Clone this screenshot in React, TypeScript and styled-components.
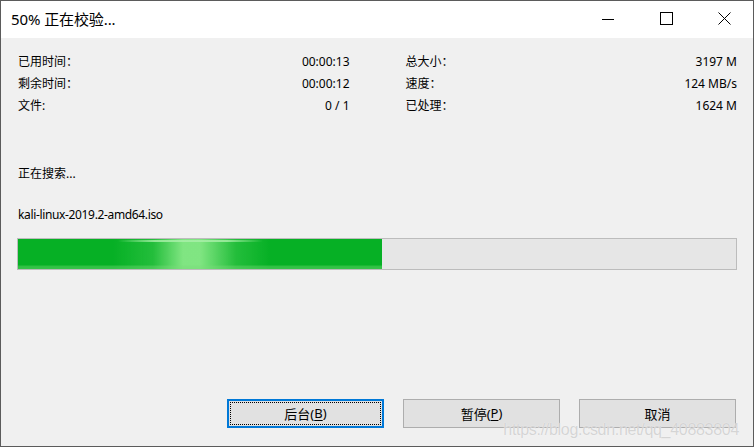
import React from "react";
import styled, { createGlobalStyle } from "styled-components";

const Global = createGlobalStyle`
  html, body { margin: 0; padding: 0; background: #f0f0f0; }
  body { font-family: "Noto Sans", "Noto Sans CJK SC", sans-serif; }
`;

const Window = styled.div`
  position: relative;
  box-sizing: border-box;
  width: 754px;
  height: 447px;
  border: 1px solid #5b5b5b;
  background: #f0f0f0;
  display: flex;
  flex-direction: column;
  color: #000;
  font-family: "Noto Sans", "Noto Sans CJK SC", sans-serif;
  font-size: 12px;
  overflow: hidden;
`;

const TitleBar = styled.div`
  height: 37px;
  background: #fff;
  display: flex;
  align-items: center;
  flex-shrink: 0;
`;

const Title = styled.div`
  flex: 1;
  padding-left: 10px;
  font-size: 15px;
  letter-spacing: -0.1px;
  padding-bottom: 2px;
`;

const CtrlButton = styled.div`
  width: 58px;
  height: 37px;
  display: flex;
  align-items: center;
  justify-content: center;
  padding-bottom: 2px;
  box-sizing: border-box;
`;

const Content = styled.div`
  flex: 1;
  display: flex;
  flex-direction: column;
  padding: 12px 16px 18px 16px;
`;

const InfoGrid = styled.div`
  display: grid;
  grid-template-columns: 1fr 1fr;
  column-gap: 56px;
  padding-left: 1px;
`;

const InfoRow = styled.div`
  height: 22px;
  display: flex;
  align-items: center;
  justify-content: space-between;
`;

const Value = styled.span`
  white-space: pre;
`;

const Status = styled.div`
  margin-top: 46px;
  height: 22px;
  display: flex;
  align-items: center;
  padding-left: 1px;
`;

const FileName = styled.div`
  margin-top: 19px;
  height: 22px;
  display: flex;
  align-items: center;
  letter-spacing: -0.35px;
  padding-left: 1px;
`;

const Bar = styled.div`
  margin-top: 13px;
  height: 32px;
  box-sizing: border-box;
  border: 1px solid #bcbcbc;
  background: #e6e6e6;
  display: flex;
`;

const Fill = styled.div`
  position: relative;
  height: 100%;
  background:
    linear-gradient(180deg,
      transparent 0, transparent 26px,
      rgba(120, 220, 120, 0.35) 27px, rgba(120, 220, 120, 0.45) 30px),
    linear-gradient(90deg,
      rgba(130, 230, 130, 0) 95px,
      rgba(90, 215, 100, 0.35) 135px,
      rgba(135, 232, 135, 0.95) 165px,
      rgba(135, 232, 135, 0.95) 182px,
      rgba(90, 215, 100, 0.35) 218px,
      rgba(130, 230, 130, 0) 252px),
    #06b025;
`;

const TopGlint = styled.div`
  position: absolute;
  top: 1px;
  left: 100px;
  width: 145px;
  height: 2px;
  background: linear-gradient(90deg,
    rgba(170, 240, 170, 0),
    rgba(170, 240, 170, 0.8) 25%,
    rgba(170, 240, 170, 0.8) 75%,
    rgba(170, 240, 170, 0));
`;

const ButtonRow = styled.div`
  margin-top: auto;
  display: flex;
  justify-content: flex-end;
  gap: 19px;
  padding-right: 1px;
`;

const Button = styled.div<{ $focused?: boolean }>`
  position: relative;
  width: 157px;
  height: 29px;
  box-sizing: border-box;
  display: flex;
  align-items: center;
  justify-content: center;
  background: #e1e1e1;
  border: ${(p) => (p.$focused ? "2px solid #0078d7" : "1px solid #adadad")};
  font-size: 13px;
  padding-bottom: 1px;
`;

const FocusRing = styled.div`
  position: absolute;
  inset: 1px;
  border: 1px dotted #000;
  pointer-events: none;
`;

const Mnemonic = styled.span`
  text-decoration: underline;
  text-underline-offset: 2px;
`;

const Watermark = styled.div`
  position: absolute;
  right: 14px;
  bottom: 7px;
  font-family: "Liberation Sans", Arial, sans-serif;
  font-size: 16px;
  color: rgba(200, 200, 200, 0.75);
  text-shadow: 0 0 1px rgba(255, 255, 255, 0.9);
  letter-spacing: -0.3px;
  pointer-events: none;
`;

const MinIcon = () => (
  <svg width="12" height="12" viewBox="0 0 12 12">
    <line x1="0" y1="6.5" x2="12" y2="6.5" stroke="#000" strokeWidth="1" />
  </svg>
);
const MaxIcon = () => (
  <svg width="13" height="13" viewBox="0 0 13 13">
    <rect x="0.5" y="0.5" width="12" height="12" fill="none" stroke="#000" strokeWidth="1" />
  </svg>
);
const CloseIcon = () => (
  <svg width="13" height="13" viewBox="0 0 13 13">
    <path d="M0.5 0.5 L12.5 12.5 M12.5 0.5 L0.5 12.5" stroke="#000" strokeWidth="1" fill="none" />
  </svg>
);

const left = [
  ["已用时间：", "00:00:13"],
  ["剩余时间：", "00:00:12"],
  ["文件:", "0 / 1"],
];
const right = [
  ["总大小：", "3197 M"],
  ["速度：", "124 MB/s"],
  ["已处理：", "1624 M"],
];

export default function App() {
  const progress = 50.7;
  return (
    <>
      <Global />
      <Window>
        <TitleBar>
          <Title>50% 正在校验...</Title>
          <CtrlButton><MinIcon /></CtrlButton>
          <CtrlButton><MaxIcon /></CtrlButton>
          <CtrlButton><CloseIcon /></CtrlButton>
        </TitleBar>
        <Content>
          <InfoGrid>
            <div>
              {left.map(([k, v]) => (
                <InfoRow key={k}>
                  <span>{k}</span>
                  <Value>{v}</Value>
                </InfoRow>
              ))}
            </div>
            <div>
              {right.map(([k, v]) => (
                <InfoRow key={k}>
                  <span>{k}</span>
                  <Value>{v}</Value>
                </InfoRow>
              ))}
            </div>
          </InfoGrid>
          <Status>正在搜索...</Status>
          <FileName>kali-linux-2019.2-amd64.iso</FileName>
          <Bar>
            <Fill style={{ width: `${progress}%` }}>
              <TopGlint />
            </Fill>
          </Bar>
          <ButtonRow>
            <Button $focused>
              <FocusRing />
              后台(<Mnemonic>B</Mnemonic>)
            </Button>
            <Button>
              暂停(<Mnemonic>P</Mnemonic>)
            </Button>
            <Button>取消</Button>
          </ButtonRow>
        </Content>
        <Watermark>https://blog.csdn.net/qq_40883804</Watermark>
      </Window>
    </>
  );
}
